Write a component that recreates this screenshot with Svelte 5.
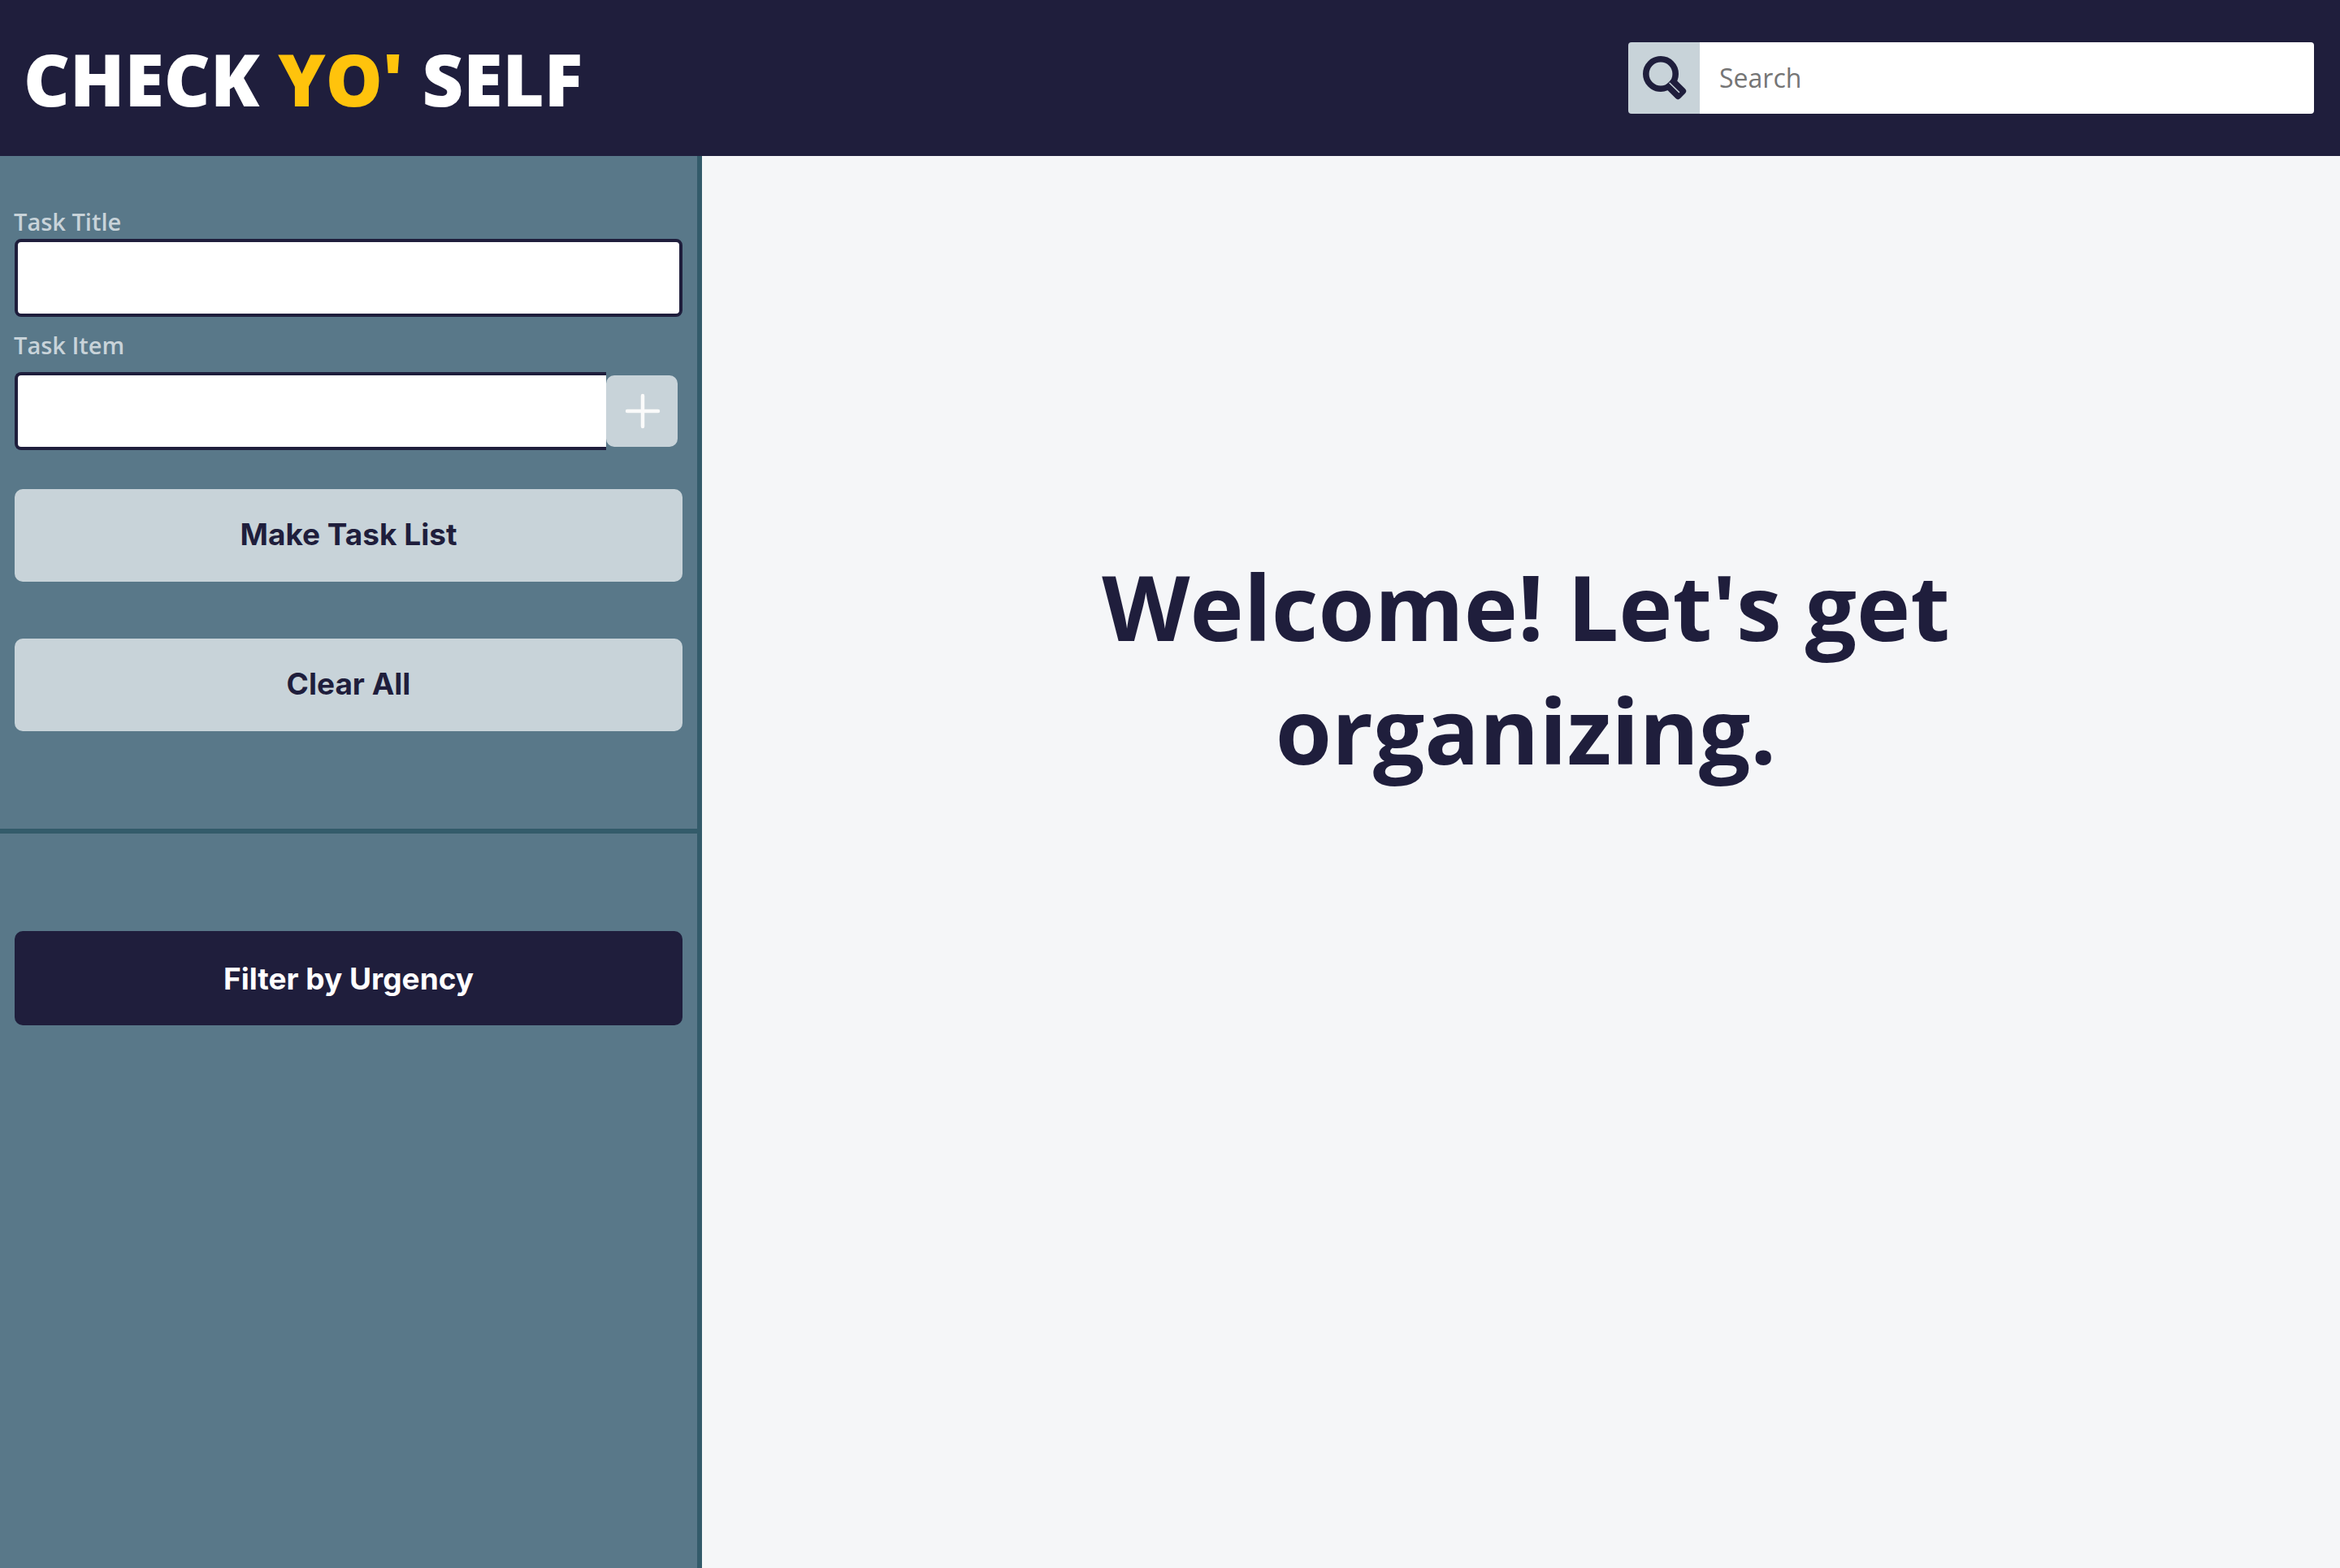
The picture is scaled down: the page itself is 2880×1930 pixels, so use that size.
<script>
  let search = $state('');
  let title = $state('');
  let item = $state('');

  function clearAll() {
    title = '';
    item = '';
  }
</script>

<div class="page">
  <header>
    <h1>CHECK <span>YO'</span> SELF</h1>
    <form class="search" role="search" onsubmit={(e) => e.preventDefault()}>
      <button class="search-button" aria-label="Search tasks">
        <svg viewBox="0 0 88 88" aria-hidden="true">
          <circle cx="40" cy="39" r="18.2" fill="none" stroke="#1f1e3c" stroke-width="7.6" />
          <rect x="-24" y="-8.2" width="24" height="16.400" rx="4" transform="translate(67 66) rotate(45)" fill="#1f1e3c" />
          <path d="M51 50.300 L62.500 61.500" stroke="#c8d3d9" stroke-width="1.500" stroke-linecap="round" />
        </svg>
      </button>
      <input type="search" placeholder="Search" aria-label="Search" bind:value={search} />
    </form>
  </header>

  <div class="body">
    <aside>
      <form class="create" onsubmit={(e) => e.preventDefault()}>
        <label for="task-title">Task Title</label>
        <input id="task-title" class="field" type="text" bind:value={title} />
        <label for="task-item" class="item-label">Task Item</label>
        <div class="item-row">
          <input id="task-item" class="field" type="text" bind:value={item} />
          <button class="add" type="button" aria-label="Add task item">
            <svg viewBox="0 0 88 88" aria-hidden="true">
              <path d="M26 44 H64 M45 25 V63" stroke="#fafafa" stroke-width="4.500" stroke-linecap="round" />
            </svg>
          </button>
        </div>
        <button class="action" type="submit">Make Task List</button>
        <button class="action" type="button" onclick={clearAll}>Clear All</button>
      </form>
      <div class="filter">
        <button class="action dark" type="button">Filter by Urgency</button>
      </div>
    </aside>
    <main>
      <h2>Welcome! Let's get organizing.</h2>
    </main>
  </div>
</div>

<style>
  :global(body) {
    margin: 0;
  }

  .page {
    display: flex;
    flex-direction: column;
    min-height: 100vh;
    font-family: 'Open Sans', sans-serif;
    color: #1f1e3c;
    background: #f5f6f8;
  }

  .page *,
  .page {
    box-sizing: border-box;
  }

  header {
    display: flex;
    align-items: flex-start;
    justify-content: space-between;
    min-height: 192px;
    padding: 0 32px 0 29px;
    background: #1f1e3c;
  }

  h1 {
    margin: 36px 0 0;
    font-size: 88px;
    font-weight: 800;
    line-height: 122px;
    color: #fff;
  }

  h1 span {
    color: #ffc30c;
  }

  button {
    padding: 0;
    border: 0;
    cursor: pointer;
  }

  .search {
    display: flex;
    width: 40%;
    max-width: 844px;
    height: 88px;
    margin-top: 52px;
  }

  svg {
    display: block;
    width: 88px;
    height: 88px;
  }

  .search-button {
    flex: none;
    background: #c8d3d9;
    border-radius: 4px 0 0 4px;
  }

  .search input {
    flex: 1;
    min-width: 0;
    padding: 0 24px 2px;
    border: 0;
    border-radius: 0 4px 4px 0;
    background: #fff;
    font: 400 32px 'Open Sans', sans-serif;
    appearance: none;
  }

  .search input::placeholder {
    color: #757575;
  }

  .body {
    display: flex;
    flex: 1;
  }

  aside {
    flex: none;
    width: 30%;
    background: #597889;
    border-right: 6px solid #335b6a;
  }

  .create {
    display: flex;
    flex-direction: column;
    padding: 61px 18px 120px 17px;
    border-bottom: 6px solid #335b6a;
  }

  label {
    margin-bottom: 1px;
    font-size: 29px;
    font-weight: 600;
    line-height: 40px;
    color: #c8d3d9;
  }

  .item-label {
    margin: 15px 0 13px;
  }

  .create .field,
  .create .action {
    margin-left: 1px;
  }

  .create .action {
    width: auto;
  }

  .field {
    height: 96px;
    padding: 0 20px;
    border: 4px solid #1f1e3c;
    border-radius: 8px;
    background: #fff;
    font: 400 32px 'Open Sans', sans-serif;
  }

  .item-row {
    display: flex;
    align-items: center;
    padding-right: 6px;
    margin-bottom: 48px;
  }

  .item-row .field {
    flex: 1;
    min-width: 0;
    border-right: 0;
    border-radius: 8px 0 0 8px;
  }

  .add {
    flex: none;
    border-radius: 10px;
    background: #c8d3d9;
  }

  .action {
    width: 100%;
    height: 114px;
    padding-bottom: 4px;
    border-radius: 10px;
    background: #c8d3d9;
    font: 700 37px Inter, sans-serif;
    color: #1f1e3c;
  }

  .action + .action {
    margin-top: 70px;
  }

  .filter {
    padding: 120px 18px;
  }

  .dark {
    height: 116px;
    padding-bottom: 0;
    background: #1f1e3c;
    color: #fff;
  }

  main {
    display: flex;
    flex: 1;
    justify-content: center;
    align-items: flex-start;
    padding: 478px 0 0 12px;
  }

  h2 {
    width: 60%;
    margin: 0;
    font-size: 112px;
    font-weight: 700;
    line-height: 152px;
    text-align: center;
  }
</style>
